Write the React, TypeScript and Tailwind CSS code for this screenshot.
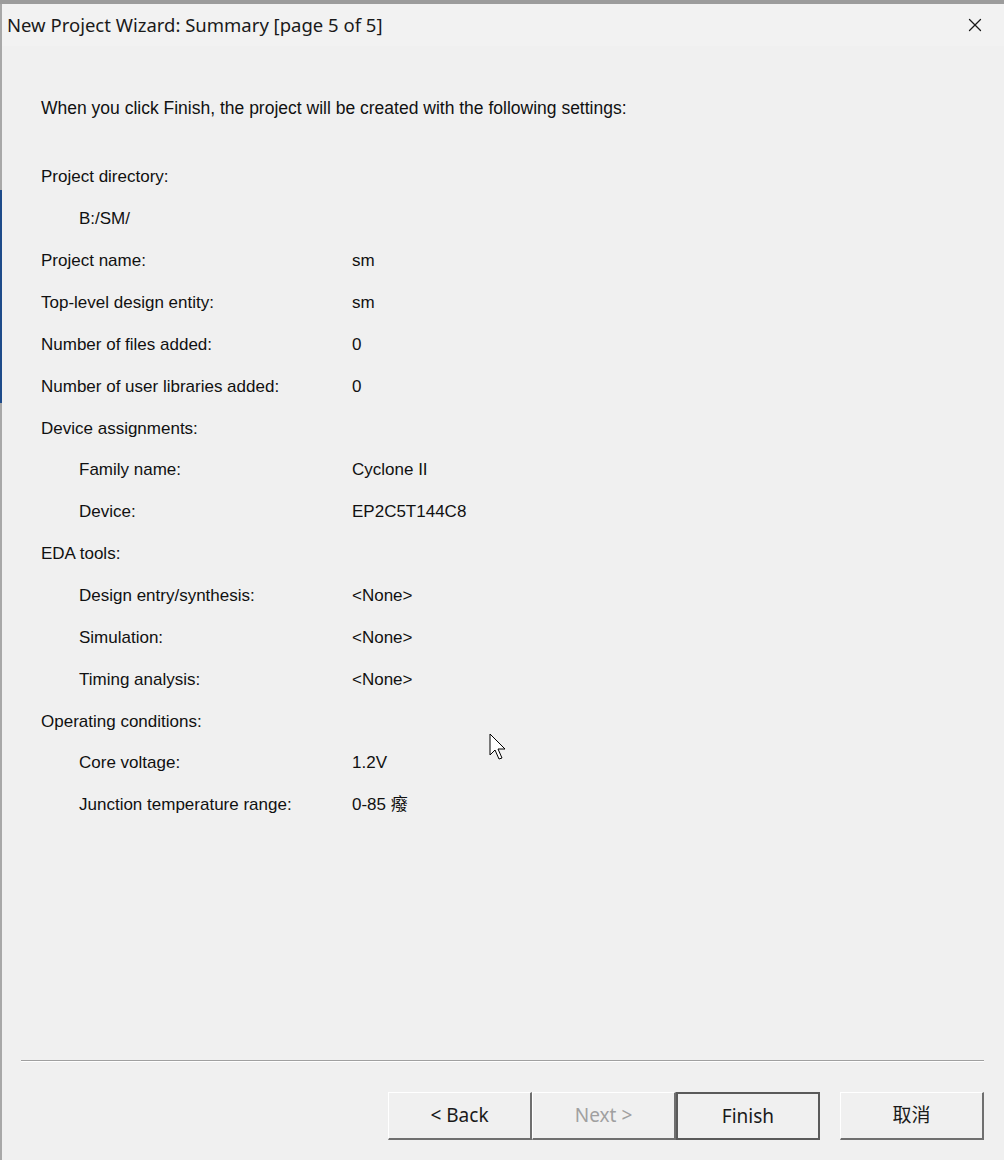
import { X } from "lucide-react";

type Row = { label: string; value?: string; indent?: boolean };

const rows: Row[] = [
  { label: "Project directory:" },
  { label: "B:/SM/", indent: true },
  { label: "Project name:", value: "sm" },
  { label: "Top-level design entity:", value: "sm" },
  { label: "Number of files added:", value: "0" },
  { label: "Number of user libraries added:", value: "0" },
  { label: "Device assignments:" },
  { label: "Family name:", value: "Cyclone II", indent: true },
  { label: "Device:", value: "EP2C5T144C8", indent: true },
  { label: "EDA tools:" },
  { label: "Design entry/synthesis:", value: "<None>", indent: true },
  { label: "Simulation:", value: "<None>", indent: true },
  { label: "Timing analysis:", value: "<None>", indent: true },
  { label: "Operating conditions:" },
  { label: "Core voltage:", value: "1.2V", indent: true },
  { label: "Junction temperature range:", value: "0-85 癈", indent: true },
];

const bodyFont = "font-['Liberation_Sans','Noto_Sans_CJK_SC',sans-serif]";
const uiFont = "font-['Noto_Sans','Noto_Sans_CJK_SC',sans-serif]";

function Button({ label, disabled, primary }: { label: string; disabled?: boolean; primary?: boolean }) {
  const edge = primary
    ? "border-2 border-[#5a5a5a]"
    : "border border-t-white border-l-white border-b-[#6f6f6f] border-r-[#6f6f6f] border-b-2 border-r-2";
  return (
    <button
      className={`flex h-[48px] w-[144px] items-center justify-center bg-[#f0f0f0] text-[19px] ${edge} ${
        disabled ? "text-[#a0a0a0]" : "text-[#1a1a1a]"
      }`}
    >
      {label}
    </button>
  );
}

function Cursor() {
  return (
    <svg className="absolute left-[489px] top-[733px]" width="20" height="30" viewBox="0 0 20 30">
      <path d="M1 1 L1 22 L6 17 L10 26 L13 25 L9 16 L16 16 Z" fill="#fff" stroke="#000" strokeWidth="1" />
    </svg>
  );
}

export default function App() {
  return (
    <div className={`relative flex h-[1160px] w-[1004px] flex-col bg-[#9c9c9c] pt-[4px] ${uiFont}`}>
      <div className="flex min-h-0 flex-1">
        <div className="flex w-[2px] flex-col bg-[#a8a8a8]">
          <div className="h-[186px]" />
          <div className="h-[213px] bg-[#1e4b8a]" />
        </div>
        <div className="flex flex-1 flex-col bg-[#f0f0f0]">
          <div className="flex h-[42px] items-center justify-between bg-[#f2f2f2] pl-[5px] pr-[18px]">
            <span className="text-[18.5px] text-[#1a1a1a]">New Project Wizard: Summary [page 5 of 5]</span>
            <X size={22} strokeWidth={1.4} className="text-[#1a1a1a]" />
          </div>

          <div className={`flex flex-1 flex-col pl-[39px] text-[17px] text-[#111] ${bodyFont}`}>
            <div className="mt-[47px] h-[30px] text-[17.5px] leading-[30px]">
              When you click Finish, the project will be created with the following settings:
            </div>
            <div className="mt-[33px] flex flex-col">
              {rows.map((r) => (
                <div key={r.label} className="grid h-[41.87px] grid-cols-[311px_1fr] items-center leading-none">
                  <span className={r.indent ? "pl-[38px]" : ""}>{r.label}</span>
                  <span>{r.value}</span>
                </div>
              ))}
            </div>
          </div>

          <div className="ml-[19px] mr-[20px] border-t border-b border-t-[#a0a0a0] border-b-white" />
          <div className="flex h-[98px] items-start pl-[386px] pt-[30px]">
            <Button label="< Back" />
            <Button label="Next >" disabled />
            <Button label="Finish" primary />
            <div className="w-[20px]" />
            <Button label="取消" />
          </div>
        </div>
      </div>
      <Cursor />
    </div>
  );
}
